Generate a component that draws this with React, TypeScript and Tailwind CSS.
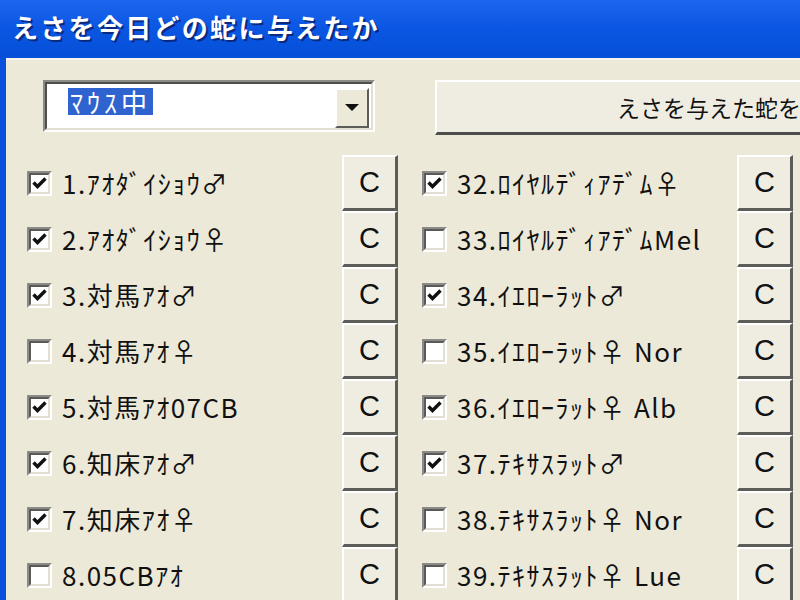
import React from "react";

// ── data ─────────────────────────────────────────────────────────────────────

type Snake = { label: string; fed: boolean };

const LEFT: Snake[] = [
  { label: "1.ｱｵﾀﾞｲｼｮｳ♂", fed: true },
  { label: "2.ｱｵﾀﾞｲｼｮｳ♀", fed: true },
  { label: "3.対馬ｱｵ♂", fed: true },
  { label: "4.対馬ｱｵ♀", fed: false },
  { label: "5.対馬ｱｵ07CB", fed: true },
  { label: "6.知床ｱｵ♂", fed: true },
  { label: "7.知床ｱｵ♀", fed: true },
  { label: "8.05CBｱｵ", fed: false },
];

const RIGHT: Snake[] = [
  { label: "32.ﾛｲﾔﾙﾃﾞｨｱﾃﾞﾑ♀", fed: true },
  { label: "33.ﾛｲﾔﾙﾃﾞｨｱﾃﾞﾑMel", fed: false },
  { label: "34.ｲｴﾛｰﾗｯﾄ♂", fed: true },
  { label: "35.ｲｴﾛｰﾗｯﾄ♀ Nor", fed: false },
  { label: "36.ｲｴﾛｰﾗｯﾄ♀ Alb", fed: true },
  { label: "37.ﾃｷｻｽﾗｯﾄ♂", fed: true },
  { label: "38.ﾃｷｻｽﾗｯﾄ♀ Nor", fed: false },
  { label: "39.ﾃｷｻｽﾗｯﾄ♀ Lue", fed: false },
];

const FONT = "font-['Noto_Sans_CJK_JP','Noto_Sans',sans-serif]";

// ── controls ─────────────────────────────────────────────────────────────────

function CheckBox({ checked }: { checked: boolean }) {
  return (
    <div className="w-[25px] h-[25px] shrink-0 border-2 border-t-[#8a8a86] border-l-[#8a8a86] border-b-white border-r-white">
      <div className="w-full h-full border-2 border-t-[#5a5a56] border-l-[#5a5a56] border-b-[#e2dfd2] border-r-[#e2dfd2] bg-white">
        {checked && (
          <svg viewBox="0 0 17 17" className="w-full h-full">
            <polyline
              points="2.5,7.5 6.5,11.5 14.5,3.5"
              fill="none"
              stroke="#111"
              strokeWidth="3.4"
            />
          </svg>
        )}
      </div>
    </div>
  );
}

function CButton() {
  return (
    <button className="w-[56px] h-[56px] shrink-0 bg-[#efede2] border-t-2 border-l-2 border-t-white border-l-white border-b-[3px] border-r-[3px] border-b-[#5c5c58] border-r-[#5c5c58] flex items-center justify-center text-[29px] leading-none text-[#111] font-['Liberation_Sans',sans-serif]">
      C
    </button>
  );
}

function SnakeRow({ snake }: { snake: Snake }) {
  return (
    <div className="h-[56px] flex items-center">
      <CheckBox checked={snake.fed} />
      <span className={`ml-[10px] flex-1 whitespace-nowrap text-[26px] leading-none tracking-[1.5px] text-[#111] ${FONT}`}>
        {snake.label}
      </span>
      <CButton />
    </div>
  );
}

// ── App ──────────────────────────────────────────────────────────────────────

export default function App() {
  return (
    <div className="w-[800px] h-[600px] overflow-hidden bg-[#ece9d8] flex flex-col">
      {/* title bar */}
      <div className="h-[58px] shrink-0 bg-gradient-to-b from-[#1c66ee] via-[#0a56e2] to-[#0650d8] flex items-center pl-[12px] pb-[4px]">
        <span
          className={`text-white font-bold text-[26px] leading-none tracking-[2.3px] whitespace-nowrap ${FONT} [text-shadow:2px_2px_0_#0a2a80]`}
        >
          えさを今日どの蛇に与えたか
        </span>
      </div>

      <div className="flex-1 flex">
        {/* window frame */}
        <div className="w-[6px] shrink-0 bg-[#0a50dc]" />

        <div className="flex-1 flex flex-col border-t-2 border-t-[#f7f5ec]">
          {/* top row */}
          <div className="flex items-start pt-[20px] pl-[37px]">
            <div className="w-[332px] h-[52px] shrink-0 border-2 border-t-[#8a8a86] border-l-[#8a8a86] border-b-white border-r-white">
              <div className="w-full h-full border-2 border-t-[#4e4e4a] border-l-[#4e4e4a] border-b-[#e2dfd2] border-r-[#e2dfd2] bg-white flex items-start pt-[4px] pl-[21px] pr-[2px]">
                <span className={`h-[27px] px-[2px] flex items-center bg-[#2f63cf] text-white text-[26px] leading-none tracking-[4px] ${FONT}`}>
                  ﾏｳｽ中
                </span>
                <div className="ml-auto w-[34px] h-[40px] bg-[#ece9d8] border-t-2 border-l-2 border-t-white border-l-white border-b-2 border-r-2 border-b-[#5c5c58] border-r-[#5c5c58] flex items-center justify-center">
                  <svg width="14" height="8" viewBox="0 0 14 8">
                    <polygon points="0,0 14,0 7,7" fill="#111" />
                  </svg>
                </div>
              </div>
            </div>

            <button className="ml-[60px] w-[500px] h-[55px] shrink-0 bg-[#efede2] border-t-2 border-l-2 border-t-white border-l-white border-b-[3px] border-r-[3px] border-b-[#4e4e4a] border-r-[#4e4e4a] flex items-center pl-[180px]">
              <span className={`whitespace-nowrap text-[23px] leading-none text-[#111] ${FONT}`}>
                えさを与えた蛇を
              </span>
            </button>
          </div>

          {/* snake list */}
          <div className="flex pl-[21px] pt-[20px]">
            <div className="w-[371px] shrink-0 flex flex-col">
              {LEFT.map((s) => (
                <SnakeRow key={s.label} snake={s} />
              ))}
            </div>
            <div className="w-[371px] ml-[24px] shrink-0 flex flex-col">
              {RIGHT.map((s) => (
                <SnakeRow key={s.label} snake={s} />
              ))}
            </div>
          </div>
        </div>
      </div>
    </div>
  );
}
